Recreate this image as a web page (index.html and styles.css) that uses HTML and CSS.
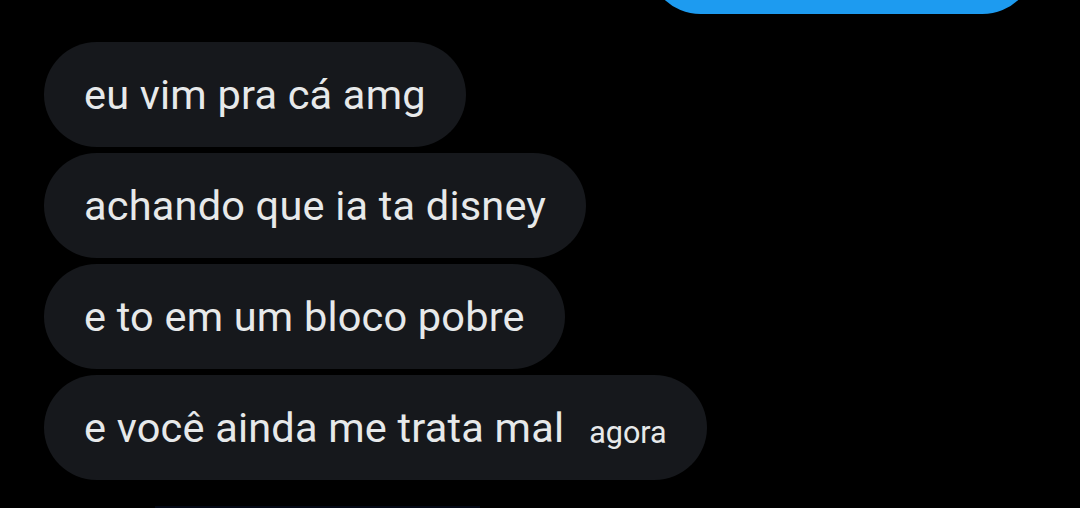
FILE: index.html
```html
<!DOCTYPE html>
<html lang="pt-BR">
<head>
<meta charset="utf-8">
<title>Mensagens</title>
<link rel="stylesheet" href="styles.css">
</head>
<body>
<div class="chat">
  <div class="bubble sent"></div>
  <div class="bubble recv"><span class="msg">eu vim pra cá amg</span></div>
  <div class="bubble recv"><span class="msg">achando que ia ta disney</span></div>
  <div class="bubble recv"><span class="msg">e to em um bloco pobre</span></div>
  <div class="bubble recv"><span class="msg">e você ainda me trata mal</span><span class="time">agora</span></div>
  <div class="composer-edge"></div>
</div>
</body>
</html>
```
FILE: styles.css
```css
html, body {
  margin: 0;
  padding: 0;
  background: #000;
  height: 100%;
  overflow: hidden;
}
.chat {
  display: flex;
  flex-direction: column;
  align-items: flex-start;
  gap: 6px;
  padding: 0 45px 0 44px;
  font-family: Roboto, "Noto Sans", sans-serif;
}
.bubble {
  box-sizing: border-box;
  height: 105px;
  border-radius: 52.5px;
  display: flex;
  align-items: center;
}
.sent {
  align-self: flex-end;
  width: 387px;
  background: #1d9bf0;
  margin-top: -91px;
  margin-bottom: 22px;
}
.recv {
  background: #16181c;
  padding: 0 40px 0 40px;
  color: #e7e9ea;
}
.msg {
  font-size: 41.5px;
  line-height: 1.2;
  letter-spacing: 0.2px;
}
.time {
  font-size: 30.5px;
  margin-left: 25px;
  margin-top: 10px;
  color: #e7e9ea;
}
.composer-edge {
  align-self: stretch;
  margin: 20px 555px 0 111px;
  height: 2px;
  background: #040916;
}
```
